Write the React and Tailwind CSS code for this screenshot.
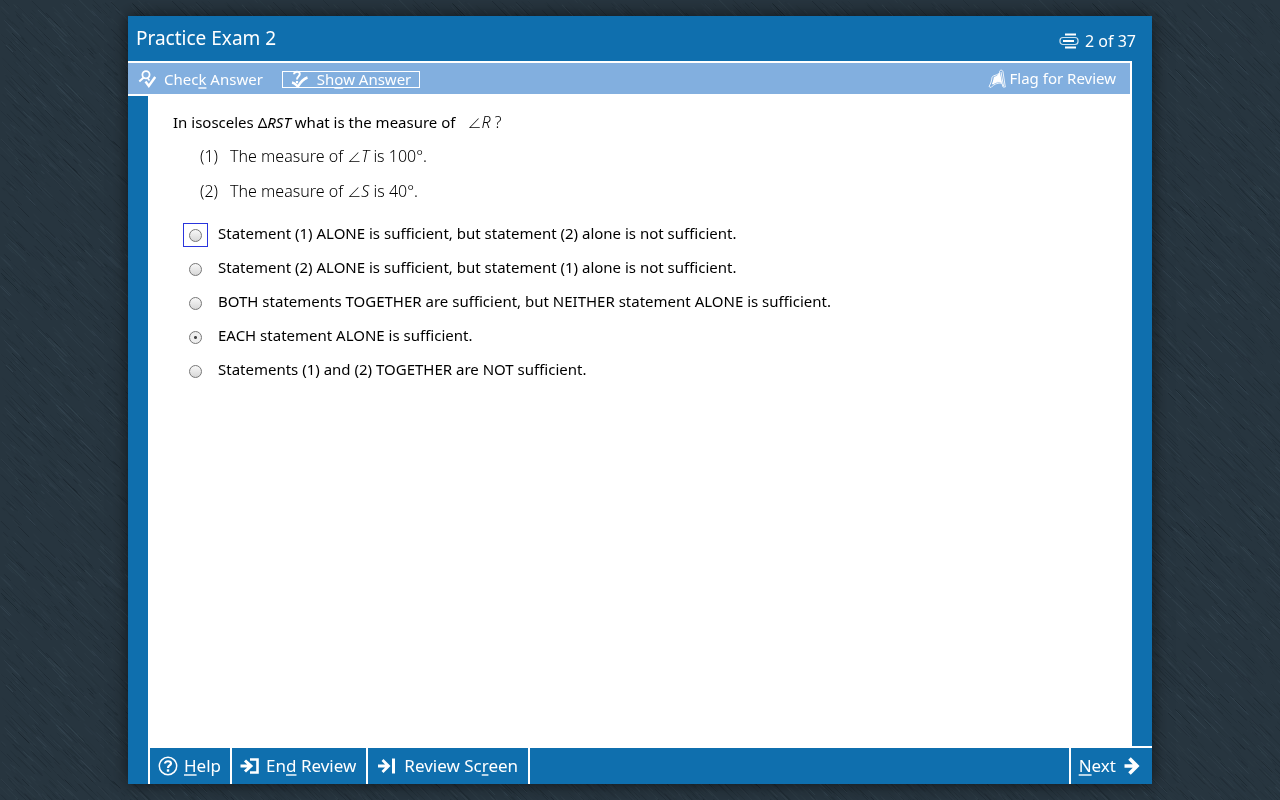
import { useState } from "react";
import clsx from "clsx";

const options = [
	"Statement (1) ALONE is sufficient, but statement (2) alone is not sufficient.",
	"Statement (2) ALONE is sufficient, but statement (1) alone is not sufficient.",
	"BOTH statements TOGETHER are sufficient, but NEITHER statement ALONE is sufficient.",
	"EACH statement ALONE is sufficient.",
	"Statements (1) and (2) TOGETHER are NOT sufficient.",
];

// small seeded generator so the brushed background is the same on every load
function makeScratches(count, size) {
	let seed = 7;
	const rand = () => {
		seed = (seed * 16807) % 2147483647;
		return seed / 2147483647;
	};
	return Array.from({ length: count }, () => {
		const len = 4 + rand() * 22;
		return {
			x: rand() * size,
			y: rand() * size,
			dx: len * 0.72,
			dy: len * 0.72,
			light: rand() > 0.6,
			opacity: 0.1 + rand() * rand() * 0.5,
		};
	});
}

const scratches = makeScratches(2600, 320);

function Backdrop() {
	return (
		<svg className="fixed inset-0 h-full w-full" aria-hidden="true">
			<pattern
				id="brushed"
				width="320"
				height="320"
				patternUnits="userSpaceOnUse"
			>
				<rect width="320" height="320" fill="#27353f" />
				{scratches.map((s, i) => (
					<line
						key={i}
						x1={s.x}
						y1={s.y}
						x2={s.x + s.dx}
						y2={s.y + s.dy}
						stroke={s.light ? "#3b4d59" : "#111b23"}
						strokeOpacity={s.opacity}
						strokeWidth="1"
					/>
				))}
			</pattern>
			<rect width="100%" height="100%" fill="url(#brushed)" />
		</svg>
	);
}

function CheckIcon() {
	return (
		<svg width="18" height="19" viewBox="0 0 18 19" fill="none" stroke="white">
			<circle cx="8" cy="4.8" r="3.6" strokeWidth="1.8" />
			<path d="M5.7 7.5 1.3 11.5" strokeWidth="2" />
			<path d="M7.5 11.5 10.8 16 17.2 7" strokeWidth="2.4" />
			<path d="M9.5 8 11.5 10.5" strokeWidth="1.6" />
		</svg>
	);
}

function ShowIcon() {
	return (
		<svg width="18" height="19" viewBox="0 0 18 19" fill="none" stroke="white">
			<path
				d="M3 4.2C3.2 1 8.8 0.8 8.8 4 8.8 6.4 6 6.4 6 9.5"
				strokeWidth="2"
			/>
			<path d="M6 11v2.2" strokeWidth="2.2" />
			<path d="M1 12.5C4 13 5 15 7 16.5 9 13 12 9 16.5 7.5" strokeWidth="2.4" />
		</svg>
	);
}

function FlagIcon() {
	return (
		<svg width="18" height="20" viewBox="0 0 18 20" fill="none" stroke="white">
			<path
				d="M6.5 8.5C9 8 10.5 6.5 11.5 5L13.2 13C10 12 7.5 13 4.5 15 6 12.5 6 10.5 6.5 8.5Z"
				fill="white"
				strokeWidth="1.4"
			/>
			<path
				d="M11.5 3.5C11 0.5 15 0.5 15 3L17.3 18H15L14 14.5C11 13.5 6.5 14.5 3 18.5L1 17.5C3 14 3.5 12 4 8.5 4.5 6 9 7 11.5 3.5Z"
				strokeWidth="1"
				strokeOpacity="0.85"
			/>
			<path d="M13 3 15.5 17" strokeWidth="0.9" />
		</svg>
	);
}

function PagesIcon() {
	return (
		<svg width="20" height="16" viewBox="0 0 20 16" fill="none" stroke="white">
			<path d="M6 1.5h11M6 14.5h11" strokeWidth="1.8" />
			<rect
				x="1"
				y="4.5"
				width="18"
				height="7"
				rx="3"
				strokeWidth="1.2"
				strokeOpacity="0.8"
			/>
			<path d="M4 8h11" strokeWidth="2" />
		</svg>
	);
}

function HelpIcon() {
	return (
		<svg width="20" height="20" viewBox="0 0 20 20" fill="none" stroke="white">
			<circle cx="10" cy="10" r="8.7" strokeWidth="1.5" />
			<path
				d="M7 7.5C7 4.5 13 4.5 13 7.5 13 9.6 10 9.3 10 12"
				strokeWidth="2.2"
			/>
			<path d="M10 13.3v2.4" strokeWidth="2.4" />
		</svg>
	);
}

function EndIcon() {
	return (
		<svg width="20" height="16" viewBox="0 0 20 16" fill="none" stroke="white">
			<path d="M0.5 8H11M5 2.5 11 8 5 13.5" strokeWidth="3" />
			<path d="M10 1.5H17.5V14.5H10" strokeWidth="2.6" />
		</svg>
	);
}

function ReviewIcon() {
	return (
		<svg width="18" height="16" viewBox="0 0 18 16" fill="none" stroke="white">
			<path d="M0 8H10M4.5 2 10.5 8 4.5 14" strokeWidth="2.8" />
			<path d="M15.5 0.5V15.5" strokeWidth="3" />
		</svg>
	);
}

function NextIcon() {
	return (
		<svg width="16" height="18" viewBox="0 0 16 18" fill="none" stroke="white">
			<path d="M0.5 9H13M5.5 1.5 13 9 5.5 16.5" strokeWidth="3.6" />
		</svg>
	);
}

function Key({ children }) {
	return (
		<span className="underline decoration-white/70 decoration-2 underline-offset-2">
			{children}
		</span>
	);
}

function FooterButton({ className, children }) {
	return (
		<button
			type="button"
			className={clsx(
				"flex items-center whitespace-nowrap border-white text-[17px]",
				className
			)}
		>
			{children}
		</button>
	);
}

function Angle({ name }) {
	return (
		<>
			<span className="font-['Noto_Sans_CJK_SC',sans-serif] text-sm/5">∠</span>
			<i>{name}</i>
		</>
	);
}

function Statement({ number, angle, degrees }) {
	return (
		<li className="flex h-5 gap-3">
			<span>({number})</span>
			<span>
				The measure of <Angle name={angle} /> is {degrees}°.
			</span>
		</li>
	);
}

export default function App() {
	const [answer, setAnswer] = useState(3);

	return (
		<div className="flex min-h-screen flex-col items-center py-4 font-['Noto_Sans','DejaVu_Sans',sans-serif]">
			<Backdrop />
			<div className="relative flex w-4/5 flex-1 flex-col bg-[#0f6fae] text-white shadow-[0_0_16px_rgba(0,0,0,0.6)]">
				<header className="flex h-[45px] items-center justify-between pl-2 pr-4">
					<h1 className="text-[19px]">Practice Exam 2</h1>
					<div className="flex items-center gap-1.5 pt-1 text-base">
						<PagesIcon />
						<span>2 of 37</span>
					</div>
				</header>

				<div className="flex flex-1">
					<div className="flex flex-1 flex-col">
						<div className="flex h-[35px] items-center justify-between border-y-2 border-r-2 border-white bg-[#82afdf] pl-[10px] pr-[14px] text-[15px]">
							<div className="flex items-center gap-[19px] pt-0.5">
								<button type="button" className="flex items-center gap-2">
									<CheckIcon />
									<span>
										Chec<Key>k</Key> Answer
									</span>
								</button>
								<button
									type="button"
									className="flex h-[17px] items-center gap-2 border border-white px-2"
								>
									<ShowIcon />
									<span className="underline underline-offset-2">
										Sh<Key>o</Key>w Answer
									</span>
								</button>
							</div>
							<button type="button" className="flex items-center gap-1">
								<FlagIcon />
								<span>Flag for Review</span>
							</button>
						</div>

						<main className="flex-1 border-l-[20px] border-[#0f6fae] bg-white px-[25px] pt-4 text-[15px] text-black">
							<p className="h-5 leading-5">
								In isosceles Δ<i>RST</i> what is the measure of{" "}
								<span className="ml-2 text-base/5 font-light">
									<Angle name="R" /> ?
								</span>
							</p>
							<ol className="mt-[14px] flex flex-col gap-[15px] pl-[27px] text-base/5 font-light">
								<Statement number={1} angle="T" degrees={100} />
								<Statement number={2} angle="S" degrees={40} />
							</ol>
							<div
								role="radiogroup"
								aria-label="Answer"
								className="mt-[17px] flex flex-col pl-[10px]"
							>
								{options.map((text, i) => (
									<label key={text} className="flex h-[34px] items-center gap-[10px]">
										<span
											className={clsx(
												"flex h-6 w-[25px] items-center justify-center border",
												i === 0 ? "border-[#2a35dd]" : "border-transparent"
											)}
										>
											<input
												type="radio"
												name="answer"
												checked={answer === i}
												onChange={() => setAnswer(i)}
												className="h-[13px] w-[13px] appearance-none rounded-full border border-[#777] bg-linear-to-b from-[#f8f8f8] to-[#d8d8d8] checked:bg-[radial-gradient(circle,#444_0_1px,#eee_2px)]"
											/>
										</span>
										<span className="pb-1">{text}</span>
									</label>
								))}
							</div>
						</main>
					</div>
					<div className="w-5 border-b-2 border-white" />
				</div>

				<footer className="flex h-9 pl-5">
					<FooterButton className="gap-1.5 border-x-2 pl-2 pr-[9px]">
						<HelpIcon />
						<span>
							<Key>H</Key>elp
						</span>
					</FooterButton>
					<FooterButton className="gap-1.5 border-r-2 pl-2 pr-[10px]">
						<EndIcon />
						<span>
							En<Key>d</Key> Review
						</span>
					</FooterButton>
					<FooterButton className="gap-2 border-r-2 px-[10px]">
						<ReviewIcon />
						<span>
							Review Sc<Key>r</Key>een
						</span>
					</FooterButton>
					<FooterButton className="ml-auto gap-2 border-l-2 pl-2 pr-3">
						<span>
							<Key>N</Key>ext
						</span>
						<NextIcon />
					</FooterButton>
				</footer>
			</div>
		</div>
	);
}
